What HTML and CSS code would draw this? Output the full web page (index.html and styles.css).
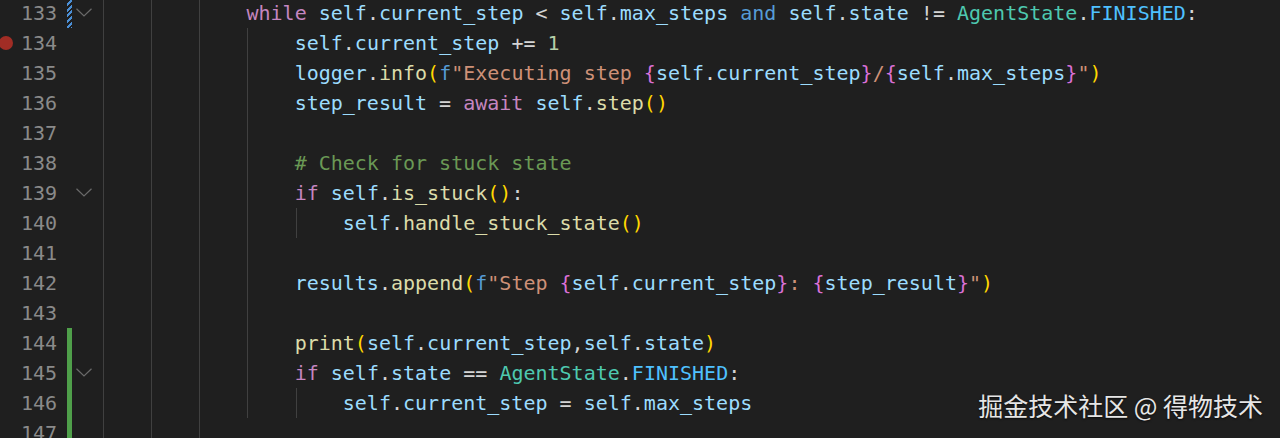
FILE: index.html
```html
<!DOCTYPE html>
<html lang="en">
<head>
<meta charset="utf-8">
<title>Editor</title>
<link rel="stylesheet" href="styles.css">
</head>
<body>
<div class="editor">
  <div class="line">
    <div class="gutter"><span class="bp"></span><span class="ln">133</span><span class="diff mod"></span><span class="fold"><svg width="16" height="9" viewBox="0 0 16 9"><polyline points="0.5,0.8 8,8 15.5,0.8"/></svg></span></div>
    <div class="code"><span class="ind"></span><span class="ind"></span><span class="ind"></span><span class="k">while</span> <span class="v">self</span>.<span class="v">current_step</span> &lt; <span class="v">self</span>.<span class="v">max_steps</span> <span class="sb">and</span> <span class="v">self</span>.<span class="v">state</span> != <span class="t">AgentState</span>.<span class="c">FINISHED</span>:</div>
  </div>
  <div class="line">
    <div class="gutter"><span class="bp"><span class="dot"></span></span><span class="ln">134</span><span class="diff"></span><span class="fold"></span></div>
    <div class="code"><span class="ind"></span><span class="ind"></span><span class="ind"></span><span class="ind"></span><span class="v">self</span>.<span class="v">current_step</span> += <span class="n">1</span></div>
  </div>
  <div class="line">
    <div class="gutter"><span class="bp"></span><span class="ln">135</span><span class="diff"></span><span class="fold"></span></div>
    <div class="code"><span class="ind"></span><span class="ind"></span><span class="ind"></span><span class="ind"></span><span class="v">logger</span>.<span class="f">info</span><span class="p1">(</span><span class="sb">f</span><span class="st">"Executing step </span><span class="p2">{</span><span class="v">self</span>.<span class="v">current_step</span><span class="p2">}</span><span class="st">/</span><span class="p2">{</span><span class="v">self</span>.<span class="v">max_steps</span><span class="p2">}</span><span class="st">"</span><span class="p1">)</span></div>
  </div>
  <div class="line">
    <div class="gutter"><span class="bp"></span><span class="ln">136</span><span class="diff"></span><span class="fold"></span></div>
    <div class="code"><span class="ind"></span><span class="ind"></span><span class="ind"></span><span class="ind"></span><span class="v">step_result</span> = <span class="k">await</span> <span class="v">self</span>.<span class="f">step</span><span class="p1">()</span></div>
  </div>
  <div class="line">
    <div class="gutter"><span class="bp"></span><span class="ln">137</span><span class="diff"></span><span class="fold"></span></div>
    <div class="code"><span class="ind"></span><span class="ind"></span><span class="ind"></span><span class="ind"></span></div>
  </div>
  <div class="line">
    <div class="gutter"><span class="bp"></span><span class="ln">138</span><span class="diff"></span><span class="fold"></span></div>
    <div class="code"><span class="ind"></span><span class="ind"></span><span class="ind"></span><span class="ind"></span><span class="cm"># Check for stuck state</span></div>
  </div>
  <div class="line">
    <div class="gutter"><span class="bp"></span><span class="ln">139</span><span class="diff"></span><span class="fold"><svg width="16" height="9" viewBox="0 0 16 9"><polyline points="0.5,0.8 8,8 15.5,0.8"/></svg></span></div>
    <div class="code"><span class="ind"></span><span class="ind"></span><span class="ind"></span><span class="ind"></span><span class="k">if</span> <span class="v">self</span>.<span class="f">is_stuck</span><span class="p1">()</span>:</div>
  </div>
  <div class="line">
    <div class="gutter"><span class="bp"></span><span class="ln">140</span><span class="diff"></span><span class="fold"></span></div>
    <div class="code"><span class="ind"></span><span class="ind"></span><span class="ind"></span><span class="ind"></span><span class="ind"></span><span class="v">self</span>.<span class="f">handle_stuck_state</span><span class="p1">()</span></div>
  </div>
  <div class="line">
    <div class="gutter"><span class="bp"></span><span class="ln">141</span><span class="diff"></span><span class="fold"></span></div>
    <div class="code"><span class="ind"></span><span class="ind"></span><span class="ind"></span><span class="ind"></span></div>
  </div>
  <div class="line">
    <div class="gutter"><span class="bp"></span><span class="ln">142</span><span class="diff"></span><span class="fold"></span></div>
    <div class="code"><span class="ind"></span><span class="ind"></span><span class="ind"></span><span class="ind"></span><span class="v">results</span>.<span class="f">append</span><span class="p1">(</span><span class="sb">f</span><span class="st">"Step </span><span class="p2">{</span><span class="v">self</span>.<span class="v">current_step</span><span class="p2">}</span><span class="st">: </span><span class="p2">{</span><span class="v">step_result</span><span class="p2">}</span><span class="st">"</span><span class="p1">)</span></div>
  </div>
  <div class="line">
    <div class="gutter"><span class="bp"></span><span class="ln">143</span><span class="diff"></span><span class="fold"></span></div>
    <div class="code"><span class="ind"></span><span class="ind"></span><span class="ind"></span><span class="ind"></span></div>
  </div>
  <div class="line">
    <div class="gutter"><span class="bp"></span><span class="ln">144</span><span class="diff add"></span><span class="fold"></span></div>
    <div class="code"><span class="ind"></span><span class="ind"></span><span class="ind"></span><span class="ind"></span><span class="f">print</span><span class="p1">(</span><span class="v">self</span>.<span class="v">current_step</span>,<span class="v">self</span>.<span class="v">state</span><span class="p1">)</span></div>
  </div>
  <div class="line">
    <div class="gutter"><span class="bp"></span><span class="ln">145</span><span class="diff add"></span><span class="fold"><svg width="16" height="9" viewBox="0 0 16 9"><polyline points="0.5,0.8 8,8 15.5,0.8"/></svg></span></div>
    <div class="code"><span class="ind"></span><span class="ind"></span><span class="ind"></span><span class="ind"></span><span class="k">if</span> <span class="v">self</span>.<span class="v">state</span> == <span class="t">AgentState</span>.<span class="c">FINISHED</span>:</div>
  </div>
  <div class="line">
    <div class="gutter"><span class="bp"></span><span class="ln">146</span><span class="diff add"></span><span class="fold"></span></div>
    <div class="code"><span class="ind"></span><span class="ind"></span><span class="ind"></span><span class="ind"></span><span class="ind"></span><span class="v">self</span>.<span class="v">current_step</span> = <span class="v">self</span>.<span class="v">max_steps</span></div>
  </div>
  <div class="line">
    <div class="gutter"><span class="bp"></span><span class="ln">147</span><span class="diff add"></span><span class="fold"></span></div>
    <div class="code"><span class="ind"></span><span class="ind"></span><span class="ind"></span></div>
  </div>
</div>
<div class="watermark">掘金技术社区 @ 得物技术</div>
</body>
</html>
```

FILE: styles.css
```css
html, body {
  margin: 0;
  padding: 0;
  background: #1f1f1f;
  overflow: hidden;
  height: 438px;
}

.editor {
  margin-top: -2px;
  font-family: "DejaVu Sans Mono", "Liberation Mono", monospace;
  font-size: 20px;
  color: #d4d4d4;
}

.line {
  display: flex;
  height: 30px;
  line-height: 30px;
}

.gutter {
  display: flex;
  align-items: stretch;
  width: 102px;
  flex: none;
}

.bp {
  position: relative;
  width: 20px;
  flex: none;
}

.dot {
  position: absolute;
  left: -1px;
  top: 8px;
  width: 14px;
  height: 14px;
  border-radius: 50%;
  background: #a12d25;
}

.ln {
  width: 37px;
  flex: none;
  text-align: right;
  color: #8a8a8a;
}

.diff {
  width: 5px;
  margin-left: 10px;
  flex: none;
}

.diff.mod {
  background: repeating-linear-gradient(135deg, #4b8fd6 0 2px, #1f1f1f 2px 4px);
}

.diff.add {
  background: #4f9f4a;
}

.fold {
  width: 16px;
  margin-left: 4px;
  flex: none;
  display: flex;
  align-items: center;
  justify-content: center;
}

.fold svg {
  display: block;
  margin-top: -2px;
}

.fold polyline {
  fill: none;
  stroke: #6b6b6b;
  stroke-width: 1.2;
}

.code {
  white-space: pre;
  flex: 1;
}

.ind {
  display: inline-block;
  width: 4ch;
  height: 30px;
  vertical-align: top;
  background: linear-gradient(#404040, #404040) 1px 0 / 1px 100% no-repeat;
}

.k { color: #c586c0; }
.v { color: #9cdcfe; }
.f { color: #dcdcaa; }
.p1 { color: #ffd700; }
.p2 { color: #da70d6; }
.st { color: #ce9178; }
.sb { color: #569cd6; }
.t { color: #4ec9b0; }
.c { color: #4fc1ff; }
.cm { color: #6a9955; }
.n { color: #b5cea8; }

.watermark {
  position: absolute;
  right: 17px;
  bottom: 20px;
  font-family: "Noto Sans CJK SC", "Noto Sans", sans-serif;
  font-size: 25px;
  line-height: 1;
  color: #e6e6e6;
  text-shadow: 0 1px 2px rgba(0, 0, 0, 0.7);
}
```
